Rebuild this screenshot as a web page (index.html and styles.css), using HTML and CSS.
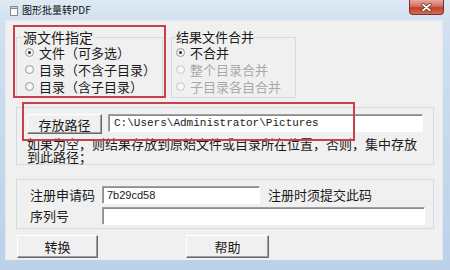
FILE: index.html
```html
<!DOCTYPE html>
<html lang="zh-CN">
<head>
    <meta charset="UTF-8">
    <title>图形批量转PDF</title>
    <link rel="stylesheet" href="styles.css">
</head>
<body>
    <div class="window">
        <div class="titlebar">
            <svg class="app-icon" width="8" height="10" viewBox="0 0 8 10">
                <rect x="0.5" y="0.5" width="7" height="9" fill="#fbfbfb" stroke="#8a8a8a"/>
                <rect x="0.5" y="0.5" width="7" height="2" fill="#c9d3dd" stroke="#8a8a8a"/>
            </svg>
            <span class="title">图形批量转PDF</span>
            <span class="close">
                <svg width="11" height="9" viewBox="0 0 11 9">
                    <path d="M2 1.5 L9 7.5 M9 1.5 L2 7.5" stroke="#5a1a12" stroke-width="3" stroke-linecap="round"/>
                    <path d="M2 1.5 L9 7.5 M9 1.5 L2 7.5" stroke="#ffffff" stroke-width="1.8" stroke-linecap="round"/>
                </svg>
            </span>
        </div>

        <div class="client">
            <div class="top-row">
                <fieldset class="group src-group">
                    <legend>源文件指定</legend>
                    <label class="radio"><span class="dot checked"></span>文件（可多选）</label>
                    <label class="radio"><span class="dot"></span>目录（不含子目录）</label>
                    <label class="radio"><span class="dot"></span>目录（含子目录）</label>
                </fieldset>
                <fieldset class="group merge-group">
                    <legend>结果文件合并</legend>
                    <label class="radio"><span class="dot checked"></span>不合并</label>
                    <label class="radio disabled"><span class="dot"></span>整个目录合并</label>
                    <label class="radio disabled"><span class="dot"></span>子目录各自合并</label>
                </fieldset>
            </div>

            <div class="frame path-frame">
                <div class="path-row">
                    <button class="btn path-btn">存放路径</button>
                    <div class="textbox path-box">C:\Users\Administrator\Pictures</div>
                </div>
                <p class="note">如果为空，则结果存放到原始文件或目录所在位置，否则，集中存放到此路径；</p>
            </div>

            <div class="frame reg-frame">
                <div class="reg-row">
                    <span class="reg-label">注册申请码</span>
                    <div class="textbox code-box">7b29cd58</div>
                    <span class="hint">注册时须提交此码</span>
                </div>
                <div class="reg-row">
                    <span class="reg-label">序列号</span>
                    <div class="textbox serial-box"></div>
                </div>
            </div>

            <div class="actions">
                <button class="btn action-btn">转换</button>
                <button class="btn action-btn help-btn">帮助</button>
            </div>

            <!-- red annotation boxes drawn over the dialog -->
            <div class="mark mark-src"></div>
            <div class="mark mark-path"></div>
        </div>
    </div>
</body>
</html>
```

FILE: styles.css
```css
* {
    box-sizing: border-box;
}

body {
    margin: 0;
    font-family: "Noto Sans CJK SC", "Liberation Sans", sans-serif;
    color: #1a1a1a;
}

.window {
    width: 450px;
    height: 270px;
    overflow: hidden;
    background: linear-gradient(180deg, #dfe9f5 0, #d2e0f0 20px, #bcd0e8 100%);
    display: flex;
    flex-direction: column;
}

.titlebar {
    height: 20px;
    display: flex;
    align-items: flex-start;
}

.app-icon {
    margin: 6px 0 0 10px;
}

.title {
    margin: 3px 0 0 4px;
    font-size: 10px;
    line-height: 13px;
    color: #111;
}

.close {
    margin-left: auto;
    margin-right: 6px;
    width: 35px;
    height: 15px;
    border: 1px solid #7d3328;
    border-top: none;
    border-radius: 0 0 4px 4px;
    background: linear-gradient(180deg, #e7a99c 0, #d2705f 45%, #c0402c 55%, #d36b4f 100%);
    display: flex;
    align-items: center;
    justify-content: center;
}

.client {
    position: relative;
    margin-left: 5px;
    width: 438px;
    height: 240px;
    padding: 9px 0 0 11px;
    background: #f0f0f0;
    border: 1px solid #e4eaf1;
    border-width: 1px 1px 0 1px;
}

.top-row {
    display: flex;
    align-items: flex-start;
}

.group {
    margin: 0;
    border: 1px solid #d3dbe2;
    padding: 0 4px 2px 8px;
    min-width: 0;
}

.group legend {
    padding: 0 1px;
    margin-left: -3px;
    font-size: 13px;
    line-height: 14px;
}

.src-group {
    width: 147px;
    margin-left: -1px;
}

.src-group legend {
    font-size: 14px;
}

.merge-group {
    width: 125px;
    margin-left: 8px;
    padding-left: 4px;
}

.merge-group legend {
    margin-left: 0;
    padding: 0;
}

.radio {
    display: flex;
    align-items: center;
    gap: 5px;
    height: 17px;
    font-size: 13px;
    line-height: 17px;
    white-space: nowrap;
}

.radio.disabled {
    color: #a9a9a9;
}

.dot {
    width: 9px;
    height: 9px;
    border: 1px solid #9a9a9a;
    border-radius: 50%;
    background: radial-gradient(circle at 60% 60%, #ffffff 0, #e6e6e6 100%);
    display: flex;
    align-items: center;
    justify-content: center;
    flex-shrink: 0;
}

.radio.disabled .dot {
    border-color: #c8c8c8;
}

.dot.checked::after {
    content: "";
    width: 3px;
    height: 3px;
    border-radius: 50%;
    background: #222;
}

.frame {
    width: 418px;
    border: 1px solid #d3dbe2;
    margin-left: -1px;
}

.path-frame {
    margin-top: 9px;
    padding: 6px 0 1px 10px;
}

.path-row {
    display: flex;
    align-items: flex-start;
    gap: 6px;
}

.btn {
    margin: 0;
    padding: 0;
    font-family: inherit;
    font-size: 13px;
    color: #1a1a1a;
    background: #f0f0f0;
    border: 1px solid;
    border-color: #ffffff #696969 #696969 #ffffff;
    box-shadow: inset -1px -1px 0 #a0a0a0;
}

.path-btn {
    width: 75px;
    height: 20px;
    line-height: 17px;
}

.textbox {
    height: 18px;
    background: #ffffff;
    border: 1px solid;
    border-color: #a0a0a0 #ffffff #ffffff #a0a0a0;
    box-shadow: inset 1px 1px 0 #8c8c8c;
}

.path-box {
    width: 315px;
    padding: 1px 0 0 5px;
    font-family: "Liberation Mono", monospace;
    font-size: 11px;
    line-height: 15px;
}

.note {
    margin: 3px 0 0;
    width: 396px;
    font-size: 13px;
    line-height: 13px;
}

.reg-frame {
    margin-top: 14px;
    padding: 6px 0 3px 13px;
}

.reg-row {
    display: flex;
    align-items: center;
    height: 18px;
}

.reg-row + .reg-row {
    margin-top: 3px;
}

.reg-label {
    width: 72px;
    font-size: 13px;
    line-height: 18px;
}

.code-box {
    width: 158px;
    padding: 1px 0 0 4px;
    font-family: "Liberation Sans", sans-serif;
    font-size: 11px;
    line-height: 15px;
}

.hint {
    margin-left: 8px;
    font-size: 13px;
    line-height: 18px;
}

.serial-box {
    width: 323px;
}

.actions {
    display: flex;
    margin-top: 6px;
}

.action-btn {
    width: 81px;
    height: 23px;
}

.help-btn {
    width: 83px;
    margin-left: 88px;
}

.mark {
    position: absolute;
    border: 2px solid #c9404a;
    pointer-events: none;
}

.mark-src {
    left: 7px;
    top: 4px;
    width: 153px;
    height: 73px;
}

.mark-path {
    left: 16px;
    top: 81px;
    width: 333px;
    height: 39px;
}
```
